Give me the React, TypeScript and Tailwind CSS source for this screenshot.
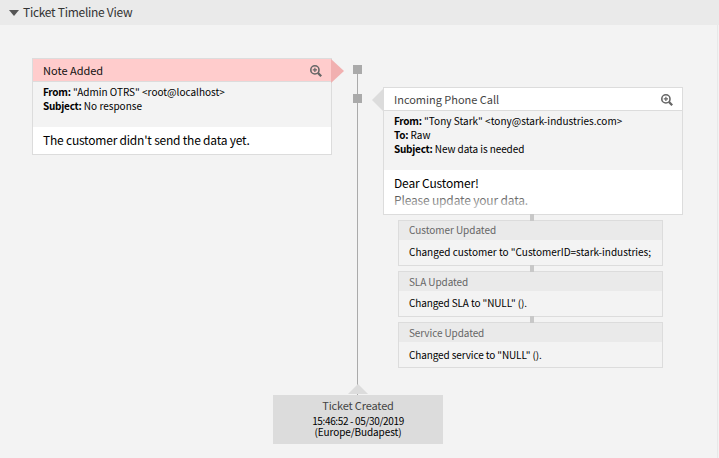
import type { ReactNode } from "react";

const ZoomIcon = () => (
  <svg width="12" height="12" viewBox="0 0 12 12" className="mt-[2px] shrink-0" fill="none" stroke="#666">
    <circle cx="4.9" cy="4.9" r="4.1" strokeWidth="1.6" />
    <path d="M4.9 2.8v4.2M2.8 4.9h4.2" strokeWidth="1.2" />
    <path d="M7.9 7.9l3.3 3.3" strokeWidth="2.2" />
  </svg>
);

const Field = ({ label, children, cls }: { label: string; children: ReactNode; cls: string }) => (
  <div className={`h-[14px] text-[10px] leading-[14px] text-black ${cls}`}>
    <b className="font-bold tracking-[-0.25px] text-black">{label}</b> {children}
  </div>
);

const Change = ({ title, text, cls, titleCls }: { title: string; text: string; cls: string; titleCls: string }) => (
  <div className="relative mt-[5px] h-[46px] w-[265px] border border-[#dcdcdc]">
    <div className="absolute -top-[7px] left-[131px] h-[7px] w-[4px] bg-[#c8c8c8]" />
    <div className={`h-[19px] bg-[#eaeaea] pl-[10px] text-[10px] text-[#666] ${titleCls}`}>{title}</div>
    <div className={`h-[25px] pl-[10px] text-[10px] text-black ${cls}`}>{text}</div>
  </div>
);

export default function App() {
  return (
    <div className="flex h-[458px] w-[719px] flex-col overflow-hidden whitespace-nowrap bg-[#f3f3f3] font-['Noto_Sans_CJK_SC',sans-serif]">
      <header className="flex h-[25px] shrink-0 items-center bg-[#eaeaea] pl-[9px] text-[12px] text-[#333]">
        <svg width="10" height="6" viewBox="0 0 10 6" className="mr-[4px]" fill="#555">
          <path d="M0 0h10L5 6z" />
        </svg>
        <span className="-mt-[2px] leading-[25px] tracking-[-0.28px]">Ticket Timeline View</span>
      </header>
      <main className="flex w-[718px] grow flex-col border-r border-[#e8e8e8] pl-[32px]">
        <div className="flex h-[370px]">
          <article className="relative mt-[33px] h-[97px] w-[300px] border border-[#dcdcdc]">
            <svg className="absolute -right-[13px] top-0" width="13" height="24" viewBox="0 0 13 24" fill="#f1b0b0">
              <path d="M0 0L13 12L0 24z" />
            </svg>
            <div className="flex h-[23px] items-center justify-between border-b border-[#dcdcdc] bg-[#ffcccc] pl-[10px] pr-[9px] text-[11px] text-[#111]">
              <span className="leading-[22px]">Note Added</span>
              <ZoomIcon />
            </div>
            <div className="h-[45px] pl-[10px] pt-[3px]">
              <Field label="From:" cls="">&quot;Admin OTRS&quot; &lt;root@localhost&gt;</Field>
              <Field label="Subject:" cls="">No response</Field>
            </div>
            <div className="h-[27px] bg-white pl-[10px] text-[12px] leading-[25px] tracking-[-0.21px] text-black">The customer didn&apos;t send the data yet.</div>
          </article>
          <div className="relative ml-[21px] mt-[40px] flex w-[9px] flex-col">
            <div className="absolute left-[4px] top-0 h-[330px] w-px bg-[#aaa]" />
            <div className="h-[9px] w-[9px] bg-[#aaa]" />
            <div className="mt-[20px] h-[9px] w-[9px] bg-[#aaa]" />
          </div>
          <div className="ml-[21px] mt-[62px] w-[300px]">
            <article className="relative h-[128px] border border-[#dcdcdc]">
              <svg className="absolute -left-[12px] top-0" width="12" height="24" viewBox="0 0 12 24" fill="#dcdcdc">
                <path d="M12 0L0 12L12 24z" />
              </svg>
              <div className="flex h-[23px] items-center justify-between border-b border-[#dcdcdc] bg-white pl-[10px] pr-[9px] text-[11px] text-[#444]">
                <span className="leading-[22px] tracking-[-0.02px]">Incoming Phone Call</span>
                <ZoomIcon />
              </div>
              <div className="h-[59px] pl-[10px] pt-[3px]">
                <Field label="From:" cls="tracking-[0.02px]">&quot;Tony Stark&quot; &lt;tony@stark-industries.com&gt;</Field>
                <Field label="To:" cls="">Raw</Field>
                <Field label="Subject:" cls="tracking-[-0.08px]">New data is needed</Field>
              </div>
              <div className="relative h-[44px] bg-white pl-[10px] pt-[4px] text-[12px] leading-[17px] text-black">
                <div className="tracking-[-0.15px]">Dear Customer!</div>
                <div className="tracking-[-0.17px]">Please update your data.</div>
                <div className="absolute inset-x-0 bottom-0 h-[27px] bg-linear-to-b from-white/0 to-white" />
              </div>
            </article>
            <div className="pl-[15px]">
              <Change title="Customer Updated" text={'Changed customer to "CustomerID=stark-industries;'} titleCls="leading-[17px] tracking-[-0.05px]" cls="leading-[23px]" />
              <Change title="SLA Updated" text={'Changed SLA to "NULL" ().'} titleCls="leading-[19px] tracking-[-0.1px]" cls="leading-[23px] tracking-[-0.12px]" />
              <Change title="Service Updated" text={'Changed service to "NULL" ().'} titleCls="leading-[19px] tracking-[-0.1px]" cls="leading-[25px] tracking-[-0.12px]" />
            </div>
          </div>
        </div>
        <div className="relative ml-[241px] h-[49px] w-[170px] bg-[#dcdcdc] pt-[3px] text-center">
          <svg className="absolute -top-[11px] left-[75px]" width="20" height="10" viewBox="0 0 20 10" fill="#dcdcdc">
            <path d="M10 0L20 10H0z" />
          </svg>
          <div className="-mt-[1px] text-[11px] leading-[16px] tracking-[-0.15px] text-[#444]">Ticket Created</div>
          <div className="mt-[2px] text-[10px] leading-[11px] tracking-[-0.35px] text-black">
            <div>15:46:52 - 05/30/2019</div>
            <div className="tracking-[-0.1px]">(Europe/Budapest)</div>
          </div>
        </div>
      </main>
    </div>
  );
}
